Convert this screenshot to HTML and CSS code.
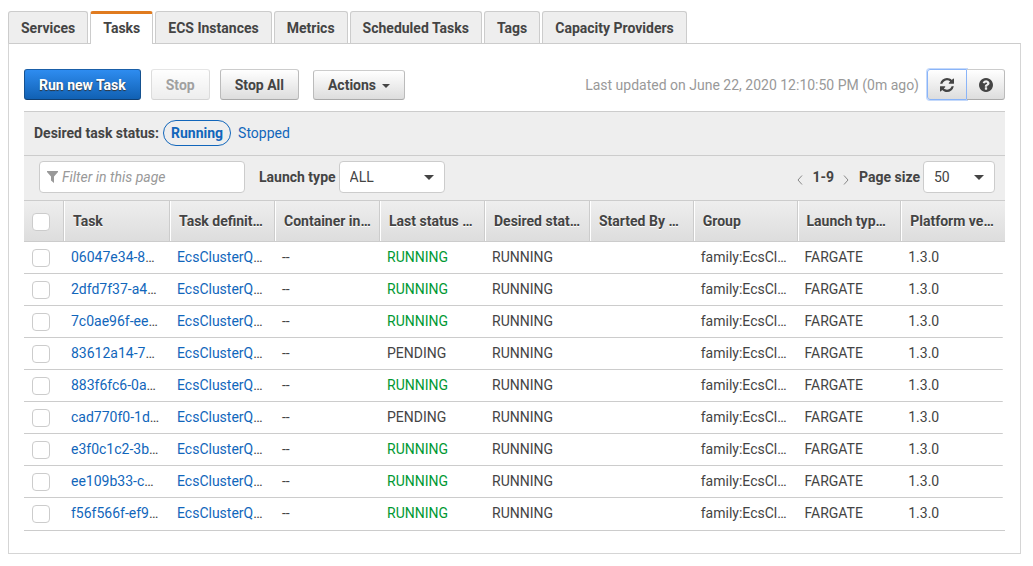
FILE: index.html
```html
<!DOCTYPE html>
<html lang="en">
<head>
<meta charset="utf-8">
<title>Cluster tasks</title>
<link rel="stylesheet" href="styles.css">
</head>
<body>
<nav class="tabs" aria-label="Cluster sections">
  <a class="tab" href="#services">Services</a>
  <a class="tab tab-active" href="#tasks" aria-current="page">Tasks</a>
  <a class="tab" href="#instances">ECS Instances</a>
  <a class="tab" href="#metrics">Metrics</a>
  <a class="tab" href="#scheduled">Scheduled Tasks</a>
  <a class="tab" href="#tags">Tags</a>
  <a class="tab" href="#capacity">Capacity Providers</a>
</nav>
<main class="panel">
  <div class="toolbar">
    <div class="actions">
      <button class="btn btn-primary" type="button">Run new Task</button>
      <button class="btn" type="button" disabled>Stop</button>
      <button class="btn" type="button">Stop All</button>
      <button class="btn btn-menu" type="button">Actions <span class="caret"></span></button>
    </div>
    <span class="updated">Last updated on June 22, 2020 12:10:50 PM (0m ago)</span>
    <div class="btn-group">
      <button class="btn btn-icon btn-focus" type="button" aria-label="Refresh">
        <svg width="14" height="14" viewBox="0 0 1536 1536"><path fill="currentColor" d="M1511 928q0 5-1 7-64 268-268 434.500T764 1536q-146 0-282.500-55T238 1324l-129 129q-19 19-45 19t-45-19-19-45V960q0-26 19-45t45-19h448q26 0 45 19t19 45-19 45l-137 137q71 66 161 102t187 36q134 0 250-65t186-179q11-17 53-117 8-23 30-23h192q13 0 22.500 9.500T1511 928zM1536 128v448q0 26-19 45t-45 19h-448q-26 0-45-19t-19-45 19-45l138-138Q969 256 768 256q-134 0-250 65T332 500q-11 17-53 117-8 23-30 23H50q-13 0-22.500-9.500T18 608v-7q65-268 270-434.500T768 0q146 0 284 55.500T1297 212l130-129q19-19 45-19t45 19 19 45z"/></svg>
      </button>
      <button class="btn btn-icon" type="button" aria-label="Help">
        <svg width="14" height="14" viewBox="0 0 1536 1536"><path fill="currentColor" d="M896 1248v-192q0-14-9-23t-23-9H672q-14 0-23 9t-9 23v192q0 14 9 23t23 9h192q14 0 23-9t9-23zm256-672q0-88-55.500-163T958 297t-170-41q-243 0-371 213-15 24 8 42l132 100q7 6 19 6 16 0 25-12 53-68 86-92 34-24 86-24 48 0 85.500 26t37.500 59q0 38-20 61t-68 45q-63 28-115.500 86.500T640 892v36q0 14 9 23t23 9h192q14 0 23-9t9-23q0-19 21.500-49.500T972 829q32-18 49-28.500t46-35 44.500-48 28-60.500 12.500-81zm384 192q0 209-103 385.500T1153.500 1433 768 1536t-385.500-103T103 1153.500 0 768t103-385.500T382.500 103 768 0t385.500 103T1433 382.500 1536 768z"/></svg>
      </button>
    </div>
  </div>
  <div class="status-bar">
    <strong>Desired task status:</strong>
    <a class="status status-current" href="#running">Running</a>
    <a class="status" href="#stopped">Stopped</a>
  </div>
  <div class="filter-bar">
    <div class="field filter">
      <svg class="funnel" width="11" height="12" viewBox="0 0 11 12"><path fill="#999" d="M0 0h11v1L7 5.500V12L4 9.500v-4L0 1z"/></svg>
      <input class="control filter-input" type="text" placeholder="Filter in this page" aria-label="Filter in this page">
    </div>
    <label class="label" for="launch">Launch type</label>
    <div class="field launch">
      <select class="control" id="launch"><option>ALL</option><option>EC2</option><option>FARGATE</option></select>
      <span class="caret caret-select"></span>
    </div>
    <div class="pager">
      <button class="page-btn" type="button" aria-label="Previous page"><svg width="6" height="10" viewBox="0 0 6 10"><path d="M5 .5L1 5l4 4.500" fill="none" stroke="currentColor"/></svg></button>
      <strong>1-9</strong>
      <button class="page-btn" type="button" aria-label="Next page"><svg width="6" height="10" viewBox="0 0 6 10"><path d="M1 .5L5 5 1 9.500" fill="none" stroke="currentColor"/></svg></button>
    </div>
    <label class="label" for="size">Page size</label>
    <div class="field size">
      <select class="control" id="size"><option>50</option><option>100</option></select>
      <span class="caret caret-select"></span>
    </div>
  </div>
  <table class="tasks">
    <colgroup><col class="col-check"><col class="col-task"><col class="col-mid" span="4"><col span="4"></colgroup>
    <thead>
      <tr><th><input class="check" type="checkbox" aria-label="Select all"></th><th>Task</th><th>Task definit…</th><th>Container in…</th><th>Last status …</th><th>Desired stat…</th><th>Started By …</th><th>Group</th><th>Launch typ…</th><th>Platform ve…</th></tr>
    </thead>
    <tbody>
      <tr><td><input class="check" type="checkbox" aria-label="Select 06047e34"></td><td><a href="#t1">06047e34-8</a>…</td><td><a href="#d">EcsClusterQ</a>…</td><td>--</td><td class="running">RUNNING</td><td>RUNNING</td><td></td><td>family:EcsCl…</td><td>FARGATE</td><td>1.3.0</td></tr>
      <tr><td><input class="check" type="checkbox" aria-label="Select 2dfd7f37"></td><td><a href="#t2">2dfd7f37-a4</a>…</td><td><a href="#d">EcsClusterQ</a>…</td><td>--</td><td class="running">RUNNING</td><td>RUNNING</td><td></td><td>family:EcsCl…</td><td>FARGATE</td><td>1.3.0</td></tr>
      <tr><td><input class="check" type="checkbox" aria-label="Select 7c0ae96f"></td><td><a href="#t3">7c0ae96f-ee</a>…</td><td><a href="#d">EcsClusterQ</a>…</td><td>--</td><td class="running">RUNNING</td><td>RUNNING</td><td></td><td>family:EcsCl…</td><td>FARGATE</td><td>1.3.0</td></tr>
      <tr><td><input class="check" type="checkbox" aria-label="Select 83612a14"></td><td><a href="#t4">83612a14-7</a>…</td><td><a href="#d">EcsClusterQ</a>…</td><td>--</td><td>PENDING</td><td>RUNNING</td><td></td><td>family:EcsCl…</td><td>FARGATE</td><td>1.3.0</td></tr>
      <tr><td><input class="check" type="checkbox" aria-label="Select 883f6fc6"></td><td><a href="#t5">883f6fc6-0a</a>…</td><td><a href="#d">EcsClusterQ</a>…</td><td>--</td><td class="running">RUNNING</td><td>RUNNING</td><td></td><td>family:EcsCl…</td><td>FARGATE</td><td>1.3.0</td></tr>
      <tr><td><input class="check" type="checkbox" aria-label="Select cad770f0"></td><td><a href="#t6">cad770f0-1d</a>…</td><td><a href="#d">EcsClusterQ</a>…</td><td>--</td><td>PENDING</td><td>RUNNING</td><td></td><td>family:EcsCl…</td><td>FARGATE</td><td>1.3.0</td></tr>
      <tr><td><input class="check" type="checkbox" aria-label="Select e3f0c1c2"></td><td><a href="#t7">e3f0c1c2-3b</a>…</td><td><a href="#d">EcsClusterQ</a>…</td><td>--</td><td class="running">RUNNING</td><td>RUNNING</td><td></td><td>family:EcsCl…</td><td>FARGATE</td><td>1.3.0</td></tr>
      <tr><td><input class="check" type="checkbox" aria-label="Select ee109b33"></td><td><a href="#t8">ee109b33-c</a>…</td><td><a href="#d">EcsClusterQ</a>…</td><td>--</td><td class="running">RUNNING</td><td>RUNNING</td><td></td><td>family:EcsCl…</td><td>FARGATE</td><td>1.3.0</td></tr>
      <tr><td><input class="check" type="checkbox" aria-label="Select f56f566f"></td><td><a href="#t9">f56f566f-ef9</a>…</td><td><a href="#d">EcsClusterQ</a>…</td><td>--</td><td class="running">RUNNING</td><td>RUNNING</td><td></td><td>family:EcsCl…</td><td>FARGATE</td><td>1.3.0</td></tr>
    </tbody>
  </table>
</main>
</body>
</html>
```
FILE: styles.css
```css
* { box-sizing: border-box; }
body {
  margin: 11px 12px 12px 8px;
  background: #fff;
  color: #444;
  font: 14px/20px Roboto, "Liberation Sans", sans-serif;
}
a { color: #1166bb; text-decoration: none; }
strong, .label { font-weight: 700; }
button, input, select { font: inherit; color: inherit; }

.tabs { display: flex; gap: 2px; }
.tab {
  height: 32px;
  padding: 6px 12px;
  border: 1px solid #ccc;
  border-bottom: 0;
  border-radius: 3px 3px 0 0;
  background: #eee;
  color: #444;
  font-weight: 700;
}
.tab-active {
  height: 33px;
  margin-bottom: -1px;
  padding-top: 4px;
  border-top: 3px solid #e07b1f;
  background: #fff;
  z-index: 1;
}
.panel {
  padding: 25px 15px 22px;
  border: 1px solid #d5d5d5;
  border-top-color: #ccc;
}

.toolbar { display: flex; align-items: center; padding-bottom: 11px; }
.actions { display: flex; align-items: flex-end; gap: 10px; margin-right: auto; }
.btn {
  height: 31px;
  padding: 0 14px;
  border: 1px solid #bbb;
  border-color: #ccc #bbb #aaa;
  border-radius: 3px;
  background: linear-gradient(#fff, #ddd);
  font-weight: 700;
}
.btn:disabled { opacity: .5; }
.btn-primary {
  border-color: #1a5fa8 #15518f #0f3f73;
  background: linear-gradient(#2e8cf0, #1161b3);
  color: #fff;
  text-shadow: 0 1px 1px #333;
}
.btn-menu { height: 30px; margin-left: 4px; }
.caret {
  display: inline-block;
  margin-left: 2px;
  border: 4px solid transparent;
  border-top-color: #444;
  border-bottom: 0;
  vertical-align: middle;
}
.updated { color: #999; margin-right: 8px; }
.btn-group { display: flex; }
.btn-icon {
  display: grid;
  place-items: center;
  width: 38px;
  padding: 0;
  border-radius: 0 3px 3px 0;
  border-left: 0;
}
.btn-focus {
  width: 40px;
  border-left: 1px solid #8ab4f8;
  border-color: #8ab4f8;
  border-radius: 3px 0 0 3px;
  box-shadow: 0 0 0 1px #8ab4f880;
}

.status-bar {
  display: flex;
  align-items: center;
  height: 44px;
  padding: 0 10px 2px;
  border-top: 1px solid #ccc;
  background: #eee;
}
.status { margin-left: 7px; }
.status-current {
  margin-left: 4px;
  padding: 2px 7px;
  border: 1px solid #1166bb;
  border-radius: 14px;
  font-weight: 700;
}
.filter-bar {
  display: flex;
  align-items: center;
  height: 45px;
  padding: 0 10px 2px 15px;
  border-top: 1px solid #ccc;
  background: #eee;
}
.field { position: relative; height: 32px; }
.filter { width: 206px; margin-right: 14px; }
.launch { width: 106px; margin-left: 3px; }
.size { width: 72px; margin-left: 3px; }
.control {
  appearance: none;
  width: 100%;
  height: 100%;
  padding: 0 10px;
  border: 1px solid #ccc;
  border-radius: 4px;
  background: #fff;
}
.filter-input { padding-left: 22px; }
.filter-input::placeholder { color: #999; font-style: italic; opacity: 1; }
.funnel { position: absolute; top: 10px; left: 8px; }
.caret-select {
  position: absolute;
  top: 14px;
  right: 11px;
  border-width: 5px 5px 0;
  pointer-events: none;
}
.pager { display: flex; align-items: center; gap: 9px; margin: 0 10px 0 auto; }
.page-btn { padding: 5px 0 0; border: 0; background: none; color: #888; line-height: 0; }

.tasks {
  width: 100%;
  table-layout: fixed;
  border-collapse: separate;
  border-spacing: 0;
  border-bottom: 1px solid #ccc;
}
.col-check { width: 40px; }
.col-task { width: 106px; }
.col-mid { width: 105px; }
th, td { overflow: hidden; text-align: left; white-space: nowrap; }
th {
  height: 42px;
  padding: 0 0 0 9px;
  border: solid #ccc;
  border-width: 1px 1px 1px 0;
  background: linear-gradient(#eee, #ddd);
  box-shadow: inset 1px 0 #fff;
  text-shadow: 0 1px #fff;
}
th:first-child { box-shadow: none; }
th:last-child { border-right: 0; }
td { height: 32px; padding: 0 0 2px 7px; }
td:first-child { padding: 0 0 2px 8px; }
th:first-child { padding: 0 0 0 8px; }
tbody tr {
  background: linear-gradient(#ccc, #ccc) no-repeat left bottom / calc(100% - 2px) 1px;
}
tbody tr:last-child { background: none; }
.running { color: #093; }
.check {
  appearance: none;
  display: block;
  width: 18px;
  height: 18px;
  margin: 1px 0 0;
  border: 1px solid #ccc;
  border-radius: 4px;
  background: #fff;
}
```
